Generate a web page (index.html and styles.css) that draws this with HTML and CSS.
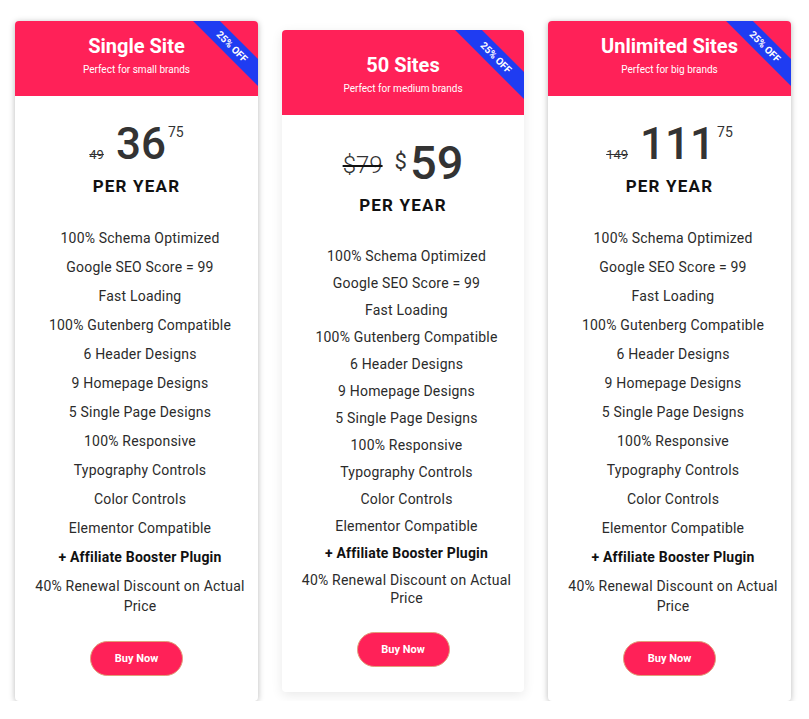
FILE: index.html
```html
<!DOCTYPE html>
<html lang="en">
<head>
<meta charset="utf-8">
<title>Pricing</title>
<link rel="stylesheet" href="styles.css">
</head>
<body>
<div class="plans">
  <div class="card card--side">
    <div class="card-head">
      <h2 class="card-title">Single Site</h2>
      <p class="card-sub">Perfect for small brands</p>
      <div class="ribbon">25% OFF</div>
    </div>
    <div class="card-body">
      <div class="price">
        <span class="price-old">49</span>
        <span class="price-main">36</span>
        <span class="price-cents">75</span>
      </div>
      <div class="per-year">PER YEAR</div>
      <ul class="features">
        <li>100% Schema Optimized</li>
        <li>Google SEO Score = 99</li>
        <li>Fast Loading</li>
        <li>100% Gutenberg Compatible</li>
        <li>6 Header Designs</li>
        <li>9 Homepage Designs</li>
        <li>5 Single Page Designs</li>
        <li>100% Responsive</li>
        <li>Typography Controls</li>
        <li>Color Controls</li>
        <li>Elementor Compatible</li>
        <li class="strong">+ Affiliate Booster Plugin</li>
        <li>40% Renewal Discount on Actual Price</li>
      </ul>
      <a class="buy" href="#">Buy Now</a>
    </div>
  </div>

  <div class="card card--mid">
    <div class="card-head">
      <h2 class="card-title">50 Sites</h2>
      <p class="card-sub">Perfect for medium brands</p>
      <div class="ribbon">25% OFF</div>
    </div>
    <div class="card-body">
      <div class="price">
        <span class="price-was">$79</span>
        <span class="price-cur">$</span>
        <span class="price-main">59</span>
      </div>
      <div class="per-year">PER YEAR</div>
      <ul class="features">
        <li>100% Schema Optimized</li>
        <li>Google SEO Score = 99</li>
        <li>Fast Loading</li>
        <li>100% Gutenberg Compatible</li>
        <li>6 Header Designs</li>
        <li>9 Homepage Designs</li>
        <li>5 Single Page Designs</li>
        <li>100% Responsive</li>
        <li>Typography Controls</li>
        <li>Color Controls</li>
        <li>Elementor Compatible</li>
        <li class="strong">+ Affiliate Booster Plugin</li>
        <li>40% Renewal Discount on Actual Price</li>
      </ul>
      <a class="buy" href="#">Buy Now</a>
    </div>
  </div>

  <div class="card card--side">
    <div class="card-head">
      <h2 class="card-title">Unlimited Sites</h2>
      <p class="card-sub">Perfect for big brands</p>
      <div class="ribbon">25% OFF</div>
    </div>
    <div class="card-body">
      <div class="price">
        <span class="price-old">149</span>
        <span class="price-main">111</span>
        <span class="price-cents">75</span>
      </div>
      <div class="per-year">PER YEAR</div>
      <ul class="features">
        <li>100% Schema Optimized</li>
        <li>Google SEO Score = 99</li>
        <li>Fast Loading</li>
        <li>100% Gutenberg Compatible</li>
        <li>6 Header Designs</li>
        <li>9 Homepage Designs</li>
        <li>5 Single Page Designs</li>
        <li>100% Responsive</li>
        <li>Typography Controls</li>
        <li>Color Controls</li>
        <li>Elementor Compatible</li>
        <li class="strong">+ Affiliate Booster Plugin</li>
        <li>40% Renewal Discount on Actual Price</li>
      </ul>
      <a class="buy" href="#">Buy Now</a>
    </div>
  </div>
</div>
</body>
</html>
```

FILE: styles.css
```css
* { box-sizing: border-box; }

html, body {
  margin: 0;
  padding: 0;
  background: #ffffff;
  font-family: Roboto, "Liberation Sans", Arial, sans-serif;
  color: #333333;
}

.plans {
  display: flex;
  align-items: center;
  gap: 24px;
  padding: 21px 0 0 15px;
}

.card {
  width: 243px;
  background: #ffffff;
  border-radius: 4px;
  overflow: hidden;
  display: flex;
  flex-direction: column;
}

.card--side {
  box-shadow: 0 1px 6px rgba(0, 0, 0, 0.28);
}

.card--mid {
  width: 242px;
  box-shadow: 0 3px 12px rgba(0, 0, 0, 0.09);
}

.card-head {
  position: relative;
  overflow: hidden;
  background: #ff2158;
  color: #ffffff;
  text-align: center;
  padding: 13px 10px 19px;
}

.card--mid .card-head {
  padding-top: 23px;
}

.card-title {
  margin: 0;
  font-size: 20px;
  line-height: 24px;
  font-weight: 700;
}

.card-sub {
  margin: 5px 0 0;
  font-size: 10px;
  line-height: 14px;
  font-weight: 400;
}

.ribbon {
  position: absolute;
  top: 16px;
  right: -34px;
  width: 120px;
  height: 19px;
  line-height: 19px;
  background: #1f3cf2;
  color: #ffffff;
  font-size: 10px;
  font-weight: 700;
  text-align: center;
  transform: rotate(45deg);
}

.card--mid .ribbon {
  top: 18px;
  right: -32px;
}

.card-body {
  display: flex;
  flex-direction: column;
  align-items: center;
  padding: 26px 12px 25px;
  text-align: center;
}

.card--mid .card-body {
  padding-top: 24px;
}

.price {
  display: flex;
  justify-content: center;
  align-items: baseline;
  color: #333333;
}

.price-old {
  font-size: 13px;
  line-height: 13px;
  text-decoration: line-through;
  margin-right: 12px;
}

.price-main {
  font-size: 44px;
  line-height: 44px;
  font-weight: 500;
}

.price-cents {
  align-self: flex-start;
  font-size: 14px;
  line-height: 14px;
  margin-top: 3px;
  margin-left: 2px;
}

.card--mid .price {
  align-items: flex-start;
}

.card--mid .price-main {
  font-size: 47px;
  line-height: 47px;
}

.price-was {
  font-size: 24px;
  line-height: 24px;
  font-weight: 300;
  text-decoration: line-through;
  text-decoration-thickness: 2px;
  text-decoration-color: #111111;
  margin-top: 14px;
  margin-right: 12px;
}

.price-cur {
  font-size: 22px;
  line-height: 22px;
  margin-top: 12px;
  margin-right: 3px;
}

.per-year {
  margin-top: 9px;
  font-size: 17px;
  line-height: 22px;
  font-weight: 700;
  letter-spacing: 1.2px;
  color: #111111;
}

.card--mid .per-year {
  margin-top: 8px;
}

.features {
  list-style: none;
  margin: 31px 0 0;
  padding: 0 0 0 7px;
  display: flex;
  flex-direction: column;
  gap: 9px;
  font-size: 14px;
  line-height: 20px;
  letter-spacing: 0.2px;
  color: #2b2b2b;
}

.card--mid .features {
  line-height: 18px;
}

.features .strong {
  font-weight: 700;
  color: #111111;
}

.buy {
  margin-top: 25px;
  width: 93px;
  height: 35px;
  line-height: 33px;
  border-radius: 18px;
  background: #ff2158;
  border: 1px solid #e0a07a;
  color: #ffffff;
  font-size: 11px;
  font-weight: 700;
  letter-spacing: 0;
  text-decoration: none;
  text-align: center;
}
```
